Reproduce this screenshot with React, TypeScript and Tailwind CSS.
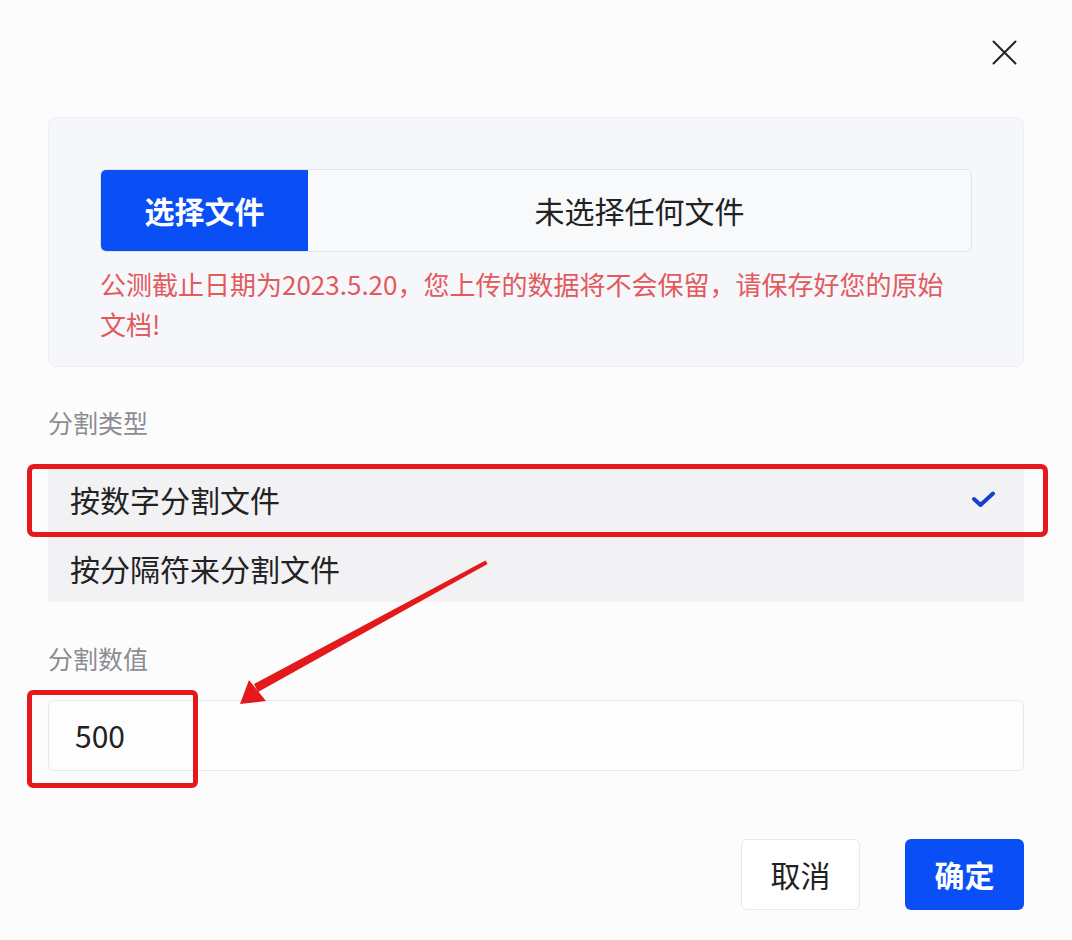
import React from "react";

export default function App() {
  return (
    <div className="relative w-[1072px] h-[940px] overflow-hidden bg-[#fcfcfd] font-['Noto_Sans_CJK_SC','Noto_Sans',sans-serif] text-[#1f1f24]">
      {/* header with close */}
      <div className="flex justify-end pt-[40px] pr-[55px]">
        <svg width="25" height="25" viewBox="0 0 25 25" fill="none" stroke="#222" strokeWidth="2" strokeLinecap="round">
          <path d="M1.5 1.5 L23.5 23.5 M23.5 1.5 L1.5 23.5" />
        </svg>
      </div>

      <div className="mx-[48px]">
        {/* upload panel */}
        <div className="mt-[52px] rounded-lg border border-[#eef0f4] bg-[#f6f7fa] px-[51px] pt-[51px] pb-[22px]">
          <div className="flex h-[83px] overflow-hidden rounded-md border border-[#e2e4ea] bg-[#f8f9fb]">
            <div className="flex w-[207px] items-center justify-center bg-[#0a4ff5] text-[30px] font-bold text-white">
              选择文件
            </div>
            <div className="flex flex-1 items-center justify-center text-[30px] text-[#222]">
              未选择任何文件
            </div>
          </div>
          <p className="mt-[12px] w-[855px] text-[26px] leading-[40px] text-[#e25a5e]">
            公测截止日期为2023.5.20，您上传的数据将不会保留，请保存好您的原始文档!
          </p>
        </div>

        {/* split type */}
        <div className="mt-[37px] text-[25px] leading-[36px] text-[#8c8c92]">分割类型</div>
        <div className="mt-[25px] flex flex-col gap-[1px]">
          <div className="flex h-[68px] items-center justify-between bg-[#f2f2f5] pl-[22px] pr-[28px] text-[30px] text-[#222]">
            <span>按数字分割文件</span>
            <svg width="25" height="17" viewBox="0 0 25 17" fill="none" stroke="#1740d0" strokeWidth="4" strokeLinecap="round" strokeLinejoin="round">
              <path d="M3 8 L9.5 14 L22 2.5" />
            </svg>
          </div>
          <div className="flex h-[68px] items-center bg-[#f2f2f5] pl-[22px] text-[30px] text-[#222]">
            按分隔符来分割文件
          </div>
        </div>

        {/* split value */}
        <div className="mt-[38px] text-[25px] leading-[36px] text-[#8c8c92]">分割数值</div>
        <div className="mt-[24px] flex h-[71px] items-center rounded-md border border-[#e8e9ee] bg-[#fdfdfe] px-[26px] text-[30px] text-[#222]">
          500
        </div>

        {/* buttons */}
        <div className="mt-[68px] flex justify-end gap-[45px]">
          <button className="flex h-[71px] w-[119px] items-center justify-center rounded-md border border-[#e8e9ee] bg-white text-[30px] text-[#222]">
            取消
          </button>
          <button className="flex h-[71px] w-[119px] items-center justify-center rounded-md bg-[#0a4ff5] text-[30px] font-bold text-white">
            确定
          </button>
        </div>
      </div>

      {/* annotations */}
      <div className="absolute left-[27px] top-[464px] h-[73px] w-[1021px] rounded-[7px] border-[5px] border-[#e3191c]" />
      <div className="absolute left-[27px] top-[690px] h-[98px] w-[171px] rounded-[6px] border-[5px] border-[#e3191c]" />
      <svg className="absolute left-0 top-0" width="1072" height="940" viewBox="0 0 1072 940">
        <path d="M485.5 560.5 L487.5 564 L258 692 L254 684 Z" fill="#e3191c" />
        <path d="M240 704 L249 680 L266 701 Z" fill="#e3191c" />
      </svg>
    </div>
  );
}
